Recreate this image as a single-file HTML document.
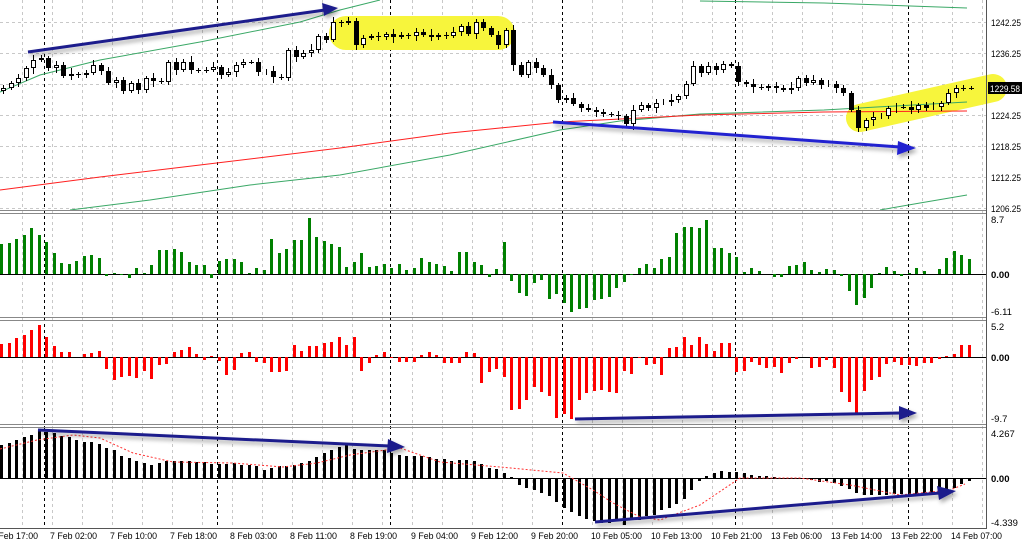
<!DOCTYPE html>
<html><head><meta charset="utf-8"><style>
html,body{margin:0;padding:0;background:#fff;width:1024px;height:541px;overflow:hidden}
svg{display:block;font-family:"Liberation Sans",sans-serif;font-size:10px}
.ax text{font-size:9.5px}
</style></head><body>
<svg id="s" width="1024" height="541" viewBox="0 0 1024 541" xmlns="http://www.w3.org/2000/svg">
<defs><filter id="sh" x="-5%" y="-50%" width="110%" height="300%"><feDropShadow dx="2" dy="3" stdDeviation="2" flood-color="#000" flood-opacity="0.35"/></filter></defs>
<g id="grid"></g>
<g id="hl">
<polyline points="346,33 498,33" stroke="#f7f53c" stroke-width="34" stroke-linecap="round" fill="none"/>
<polyline points="860,118 993,88" stroke="#f7f53c" stroke-width="28" stroke-linecap="round" fill="none"/>
</g>
<g fill="none" stroke-width="1">
<polyline stroke="#3aa866" points="0,92 40,75 100,60 200,42 300,22 340,10 380,0"/>
<polyline stroke="#3aa866" points="700,1 824,3 967,8"/>
<polyline stroke="#3aa866" points="70,210 150,200 250,185 340,175 450,155 560,130 620,121 700,114 824,110 967,102"/>
<polyline stroke="#3aa866" points="880,210 920,203 967,195"/>
<polyline stroke="#ff2020" points="0,190 100,177 200,165 340,148 450,133 560,122 700,115 824,112 967,111"/>
</g>
<g id="bars"></g>
<g id="sig" fill="none" stroke="#ff3030" stroke-width="1" stroke-dasharray="2,2">
<polyline points="0,449 37,440 73,435 100,438 133,453 173,462 233,463 283,467 317,463 350,455 400,448 440,462 500,467 563,473 593,490 613,503 640,517 660,520 700,505 740,478 800,478 850,485 900,495 950,490 965,484"/>
</g>
<g id="arrows" filter="url(#sh)">
<line x1="28" y1="52" x2="325" y2="10" stroke="#1c1c8c" stroke-width="3"/>
<polygon points="338,8 322,3 324,16" fill="#1c1c8c"/>
<line x1="553" y1="122" x2="900" y2="147" stroke="#2323d0" stroke-width="3"/>
<polygon points="916,148 898,141 897,155" fill="#2323d0"/>
<line x1="575" y1="419" x2="900" y2="413" stroke="#1c1c8c" stroke-width="3"/>
<polygon points="917,413 899,406 899,420" fill="#1c1c8c"/>
<line x1="38" y1="430" x2="390" y2="446" stroke="#1c1c8c" stroke-width="3"/>
<polygon points="405,447 388,439 387,453" fill="#1c1c8c"/>
<line x1="595" y1="522" x2="940" y2="493" stroke="#1c1c8c" stroke-width="3"/>
<polygon points="956,491 937,486 939,500" fill="#1c1c8c"/>
</g>
<g id="frame">
<rect x="0" y="210" width="987" height="1" fill="#888"/><rect x="0" y="213" width="987" height="1" fill="#888"/>
<rect x="0" y="317" width="987" height="1" fill="#888"/><rect x="0" y="320" width="987" height="1" fill="#888"/>
<rect x="0" y="424" width="987" height="1" fill="#888"/><rect x="0" y="427" width="987" height="1" fill="#888"/>
<rect x="0" y="528" width="987" height="1" fill="#555"/>
<rect x="986" y="0" width="1" height="529" fill="#555"/>
</g>
<g fill="#000" class="ax">
<text x="991" y="26" textLength="30" lengthAdjust="spacingAndGlyphs">1242.25</text>
<text x="991" y="57" textLength="30" lengthAdjust="spacingAndGlyphs">1236.25</text>
<text x="991" y="119" textLength="30" lengthAdjust="spacingAndGlyphs">1224.25</text>
<text x="991" y="150" textLength="30" lengthAdjust="spacingAndGlyphs">1218.25</text>
<text x="991" y="181" textLength="30" lengthAdjust="spacingAndGlyphs">1212.25</text>
<text x="991" y="212" textLength="30" lengthAdjust="spacingAndGlyphs">1206.25</text>
<rect x="988" y="82" width="34" height="12" fill="#000"/>
<text x="990" y="92" fill="#fff" textLength="30" lengthAdjust="spacingAndGlyphs">1229.58</text>
<text x="991" y="223">8.7</text>
<text x="991" y="278" font-weight="bold">0.00</text>
<text x="991" y="315">-6.11</text>
<text x="991" y="330">5.2</text>
<text x="991" y="361" font-weight="bold">0.00</text>
<text x="991" y="422">-9.7</text>
<text x="991" y="437">4.267</text>
<text x="991" y="482" font-weight="bold">0.00</text>
<text x="991" y="526">-4.339</text>
</g>
<g fill="#000" class="ax">
<text x="-9" y="539" textLength="47" lengthAdjust="spacingAndGlyphs">7 Feb 17:00</text>
<text x="50" y="539" textLength="47" lengthAdjust="spacingAndGlyphs">7 Feb 02:00</text>
<text x="110" y="539" textLength="47" lengthAdjust="spacingAndGlyphs">7 Feb 10:00</text>
<text x="170" y="539" textLength="47" lengthAdjust="spacingAndGlyphs">7 Feb 18:00</text>
<text x="230" y="539" textLength="47" lengthAdjust="spacingAndGlyphs">8 Feb 03:00</text>
<text x="290" y="539" textLength="47" lengthAdjust="spacingAndGlyphs">8 Feb 11:00</text>
<text x="350" y="539" textLength="47" lengthAdjust="spacingAndGlyphs">8 Feb 19:00</text>
<text x="411" y="539" textLength="47" lengthAdjust="spacingAndGlyphs">9 Feb 04:00</text>
<text x="471" y="539" textLength="47" lengthAdjust="spacingAndGlyphs">9 Feb 12:00</text>
<text x="531" y="539" textLength="47" lengthAdjust="spacingAndGlyphs">9 Feb 20:00</text>
<text x="591" y="539" textLength="51" lengthAdjust="spacingAndGlyphs">10 Feb 05:00</text>
<text x="651" y="539" textLength="51" lengthAdjust="spacingAndGlyphs">10 Feb 13:00</text>
<text x="711" y="539" textLength="51" lengthAdjust="spacingAndGlyphs">10 Feb 21:00</text>
<text x="771" y="539" textLength="51" lengthAdjust="spacingAndGlyphs">13 Feb 06:00</text>
<text x="831" y="539" textLength="51" lengthAdjust="spacingAndGlyphs">13 Feb 14:00</text>
<text x="891" y="539" textLength="51" lengthAdjust="spacingAndGlyphs">13 Feb 22:00</text>
<text x="951" y="539" textLength="51" lengthAdjust="spacingAndGlyphs">14 Feb 07:00</text>
</g>
</svg>
<script>
(function(){
var NS="http://www.w3.org/2000/svg";
function el(p,t,a){var e=document.createElementNS(NS,t);for(var k in a)e.setAttribute(k,a[k]);p.appendChild(e);return e;}
var g=document.getElementById('grid');
for(var x=22;x<986;x+=30){el(g,'line',{x1:x+.5,y1:0,x2:x+.5,y2:528,stroke:'#c8c8c8','stroke-dasharray':'3,3'});}
[22,53,84,115,146,177,208].forEach(function(y){el(g,'line',{x1:0,y1:y+.5,x2:986,y2:y+.5,stroke:'#c8c8c8','stroke-dasharray':'3,3'});});
[44,217,390,562,735,908].forEach(function(x){el(g,'line',{x1:x+.5,y1:0,x2:x+.5,y2:528,stroke:'#000','stroke-dasharray':'3,3'});});
var b=document.getElementById('bars');
el(b,'line',{x1:0,y1:274.5,x2:986,y2:274.5,stroke:'#000'});
el(b,'line',{x1:0,y1:357.5,x2:986,y2:357.5,stroke:'#000'});
el(b,'line',{x1:0,y1:478.5,x2:986,y2:478.5,stroke:'#000'});
var G=[30,31,35,39,46,39,32,21,11,10,13,18,19,16,-2,1,-1,-4,6,1,9,24,24,25,22,12,9,9,-4,13,15,15,12,1,6,4,35,21,25,34,34,56,37,33,30,27,7,12,21,7,8,10,6,10,
4,6,16,12,10,8,3,22,22,12,9,-3,5,32,-7,-19,-22,-9,-6,-25,-20,-29,-38,-35,-34,-26,-25,-23,-14,-8,-1,6,10,6,15,17,41,47,
47,46,54,26,26,21,17,2,6,3,0,-3,-3,8,9,12,4,2,5,4,-2,-17,-31,-24,-14,1,7,3,-2,1,6,3,0,5,16,23,19,15];
var R=[13,14,19,22,27,32,20,11,5,5,0,3,4,6,-12,-23,-20,-19,-21,-14,-22,-8,-7,5,7,10,3,-3,1,-4,-18,-13,4,5,-5,-6,-15,-15,-14,12,6,11,11,14,15,20,12,20,-14,-6,2,5,-1,-5,
-5,-5,2,5,2,-6,-6,-6,5,4,-26,-15,-12,-20,-53,-52,-43,-30,-35,-39,-61,-57,-62,-43,-36,-34,-33,-35,-36,-14,-17,-1,-8,-7,-18,9,10,20,
12,20,13,6,14,14,-15,-14,-5,-8,-11,-10,-16,-6,-2,0,-11,-10,-3,-11,-35,-45,-57,-34,-23,-20,-7,-5,-8,-8,-9,-6,-6,-2,1,3,12,12];
var K=[33,35,38,41,43,47,46,45,42,41,38,36,36,34,30,28,22,20,17,15,13,15,17,17,17,17,16,16,14,14,14,15,13,13,12,8,10,12,12,13,15,17,21,25,28,31,33,29,28,28,28,28,25,23,
22,22,22,21,19,19,17,18,18,17,14,10,9,5,1,-7,-10,-12,-15,-18,-24,-30,-34,-38,-41,-43,-45,-45,-43,-47,-42,-42,-38,-37,-32,-30,-26,-21,-12,-3,
2,5,7,6,6,5,3,2,2,1,0,0,0,-1,-2,-4,-3,-5,-8,-11,-15,-17,-17,-17,-17,-16,-16,-16,-16,-16,-16,-16,-12,-10,-6,-3,0,0];
function hist(arr,zero,col){arr.forEach(function(v,i){var x=Math.round(7.5*i);if(v===0)return;
var y=v>0?zero-v:zero;el(b,'rect',{x:x,y:y,width:3,height:Math.abs(v),fill:col});});}
hist(G,274,'#008000');hist(R,357,'#ff0000');hist(K,478,'#000');
var C=[88,83,78,68,60,58,68,65,76,74,75,73,65,71,83,80,91,83,90,78,81,82,62,70,62,70,70,70,67,75,72,65,62,62,72,71,77,78,50,57,53,50,36,40,22,23,21,45,38,36,37,34,37,35,36,32,35,37,35,36,32,26,34,22,28,35,45,30,65,75,62,68,75,85,100,98,104,108,110,112,114,115,116,124,110,105,108,103,102,100,96,84,66,73,66,70,64,66,82,84,87,88,86,88,90,88,78,83,80,85,84,88,93,110,128,120,117,116,108,107,107,110,105,108,107,103,93,88,88,88];
var W=[3,2,4,2,5,3,2,4,3,6,2,3,5,2,4,3];
for(var i=0;i<C.length;i++){var x=Math.round(7.5*i)+1;var o=i?C[i-1]:C[i]+3,c=C[i];
var t=Math.min(o,c),bt=Math.max(o,c);var hi=t-W[i%16],lo=bt+W[(i+5)%16];
el(b,'line',{x1:x+2.5,y1:hi,x2:x+2.5,y2:lo,stroke:'#000'});
if(bt-t<1){el(b,'line',{x1:x,y1:t+.5,x2:x+5,y2:t+.5,stroke:'#000'});}
else if(c>o){el(b,'rect',{x:x,y:t,width:5,height:bt-t,fill:'#000'});}
else{el(b,'rect',{x:x+.5,y:t+.5,width:4,height:bt-t-1,fill:'#fff',stroke:'#000'});}}
})();
</script>
</body></html>
